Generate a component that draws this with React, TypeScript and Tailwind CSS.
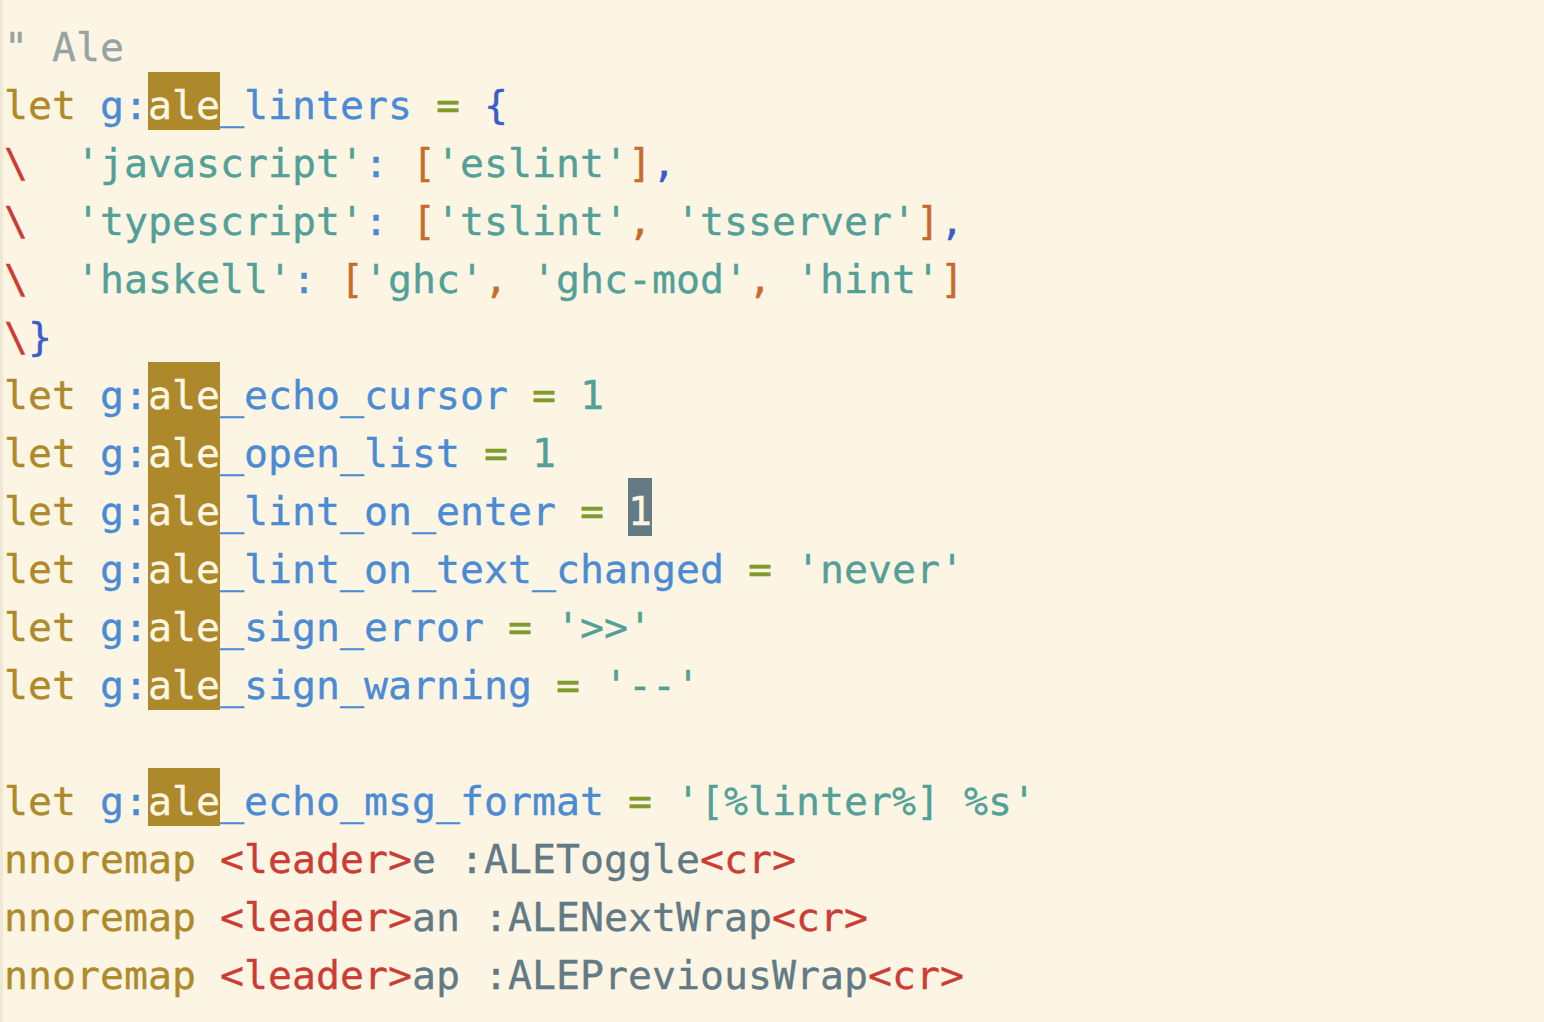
import React from "react";

type Seg = [string, string];

const Y = "text-[#ae8a2b]";
const B = "text-[#4a8bd4]";
const T = "text-[#52a097]";
const G = "text-[#7f9b2b]";
const R = "text-[#cc3c35]";
const O = "text-[#c76b2c]";
const V = "text-[#3e5bcc]";
const C = "text-[#95a3a2]";
const N = "text-[#627a85]";
const HL = "HL";
const CUR = "CUR";

const letLine = (name: string, rest: Seg[]): Seg[] => [
  ["let ", Y],
  ["g:", B],
  ["ale", HL],
  [name, B],
  [" ", N],
  ["=", G],
  [" ", N],
  ...rest,
];

const lines: Seg[][] = [
  [['" Ale', C]],
  letLine("_linters", [["{", V]]),
  [
    ["\\", R],
    ["  ", N],
    ["'javascript'", T],
    [":", B],
    [" ", N],
    ["[", O],
    ["'eslint'", T],
    ["]", O],
    [",", V],
  ],
  [
    ["\\", R],
    ["  ", N],
    ["'typescript'", T],
    [":", B],
    [" ", N],
    ["[", O],
    ["'tslint'", T],
    [",", O],
    [" ", N],
    ["'tsserver'", T],
    ["]", O],
    [",", V],
  ],
  [
    ["\\", R],
    ["  ", N],
    ["'haskell'", T],
    [":", B],
    [" ", N],
    ["[", O],
    ["'ghc'", T],
    [",", O],
    [" ", N],
    ["'ghc-mod'", T],
    [",", O],
    [" ", N],
    ["'hint'", T],
    ["]", O],
  ],
  [
    ["\\", R],
    ["}", V],
  ],
  letLine("_echo_cursor", [["1", T]]),
  letLine("_open_list", [["1", T]]),
  letLine("_lint_on_enter", [["1", CUR]]),
  letLine("_lint_on_text_changed", [["'never'", T]]),
  letLine("_sign_error", [["'>>'", T]]),
  letLine("_sign_warning", [["'--'", T]]),
  [],
  letLine("_echo_msg_format", [["'[%linter%] %s'", T]]),
  [
    ["nnoremap", Y],
    [" ", N],
    ["<leader>", R],
    ["e :ALEToggle", N],
    ["<cr>", R],
  ],
  [
    ["nnoremap", Y],
    [" ", N],
    ["<leader>", R],
    ["an :ALENextWrap", N],
    ["<cr>", R],
  ],
  [
    ["nnoremap", Y],
    [" ", N],
    ["<leader>", R],
    ["ap :ALEPreviousWrap", N],
    ["<cr>", R],
  ],
];

export default function App() {
  return (
    <div
      className="w-[1544px] h-[1022px] overflow-hidden bg-[#fcf5e3] border-l-[3px] border-[#eee8d5] pl-[1px] pt-[14px] text-[39.87px] whitespace-pre [-webkit-text-stroke:0.35px]"
      style={{ fontFamily: '"DejaVu Sans Mono", "Liberation Mono", monospace' }}
    >
      {lines.map((segs, i) => (
        <div key={i} className="h-[58px] leading-[66px]">
          {segs.map(([t, c], j) => {
            if (c === HL)
              return (
                <span
                  key={j}
                  className="inline-block h-[58px] leading-[66px] bg-[#ad892b] text-[#fdf6e3]"
                >
                  {t}
                </span>
              );
            if (c === CUR)
              return (
                <span
                  key={j}
                  className="inline-block h-[58px] leading-[66px] bg-[#657b83] text-[#fdf6e3]"
                >
                  {t}
                </span>
              );
            return (
              <span key={j} className={c}>
                {t}
              </span>
            );
          })}
          {segs.length === 0 ? "\u00a0" : null}
        </div>
      ))}
    </div>
  );
}
